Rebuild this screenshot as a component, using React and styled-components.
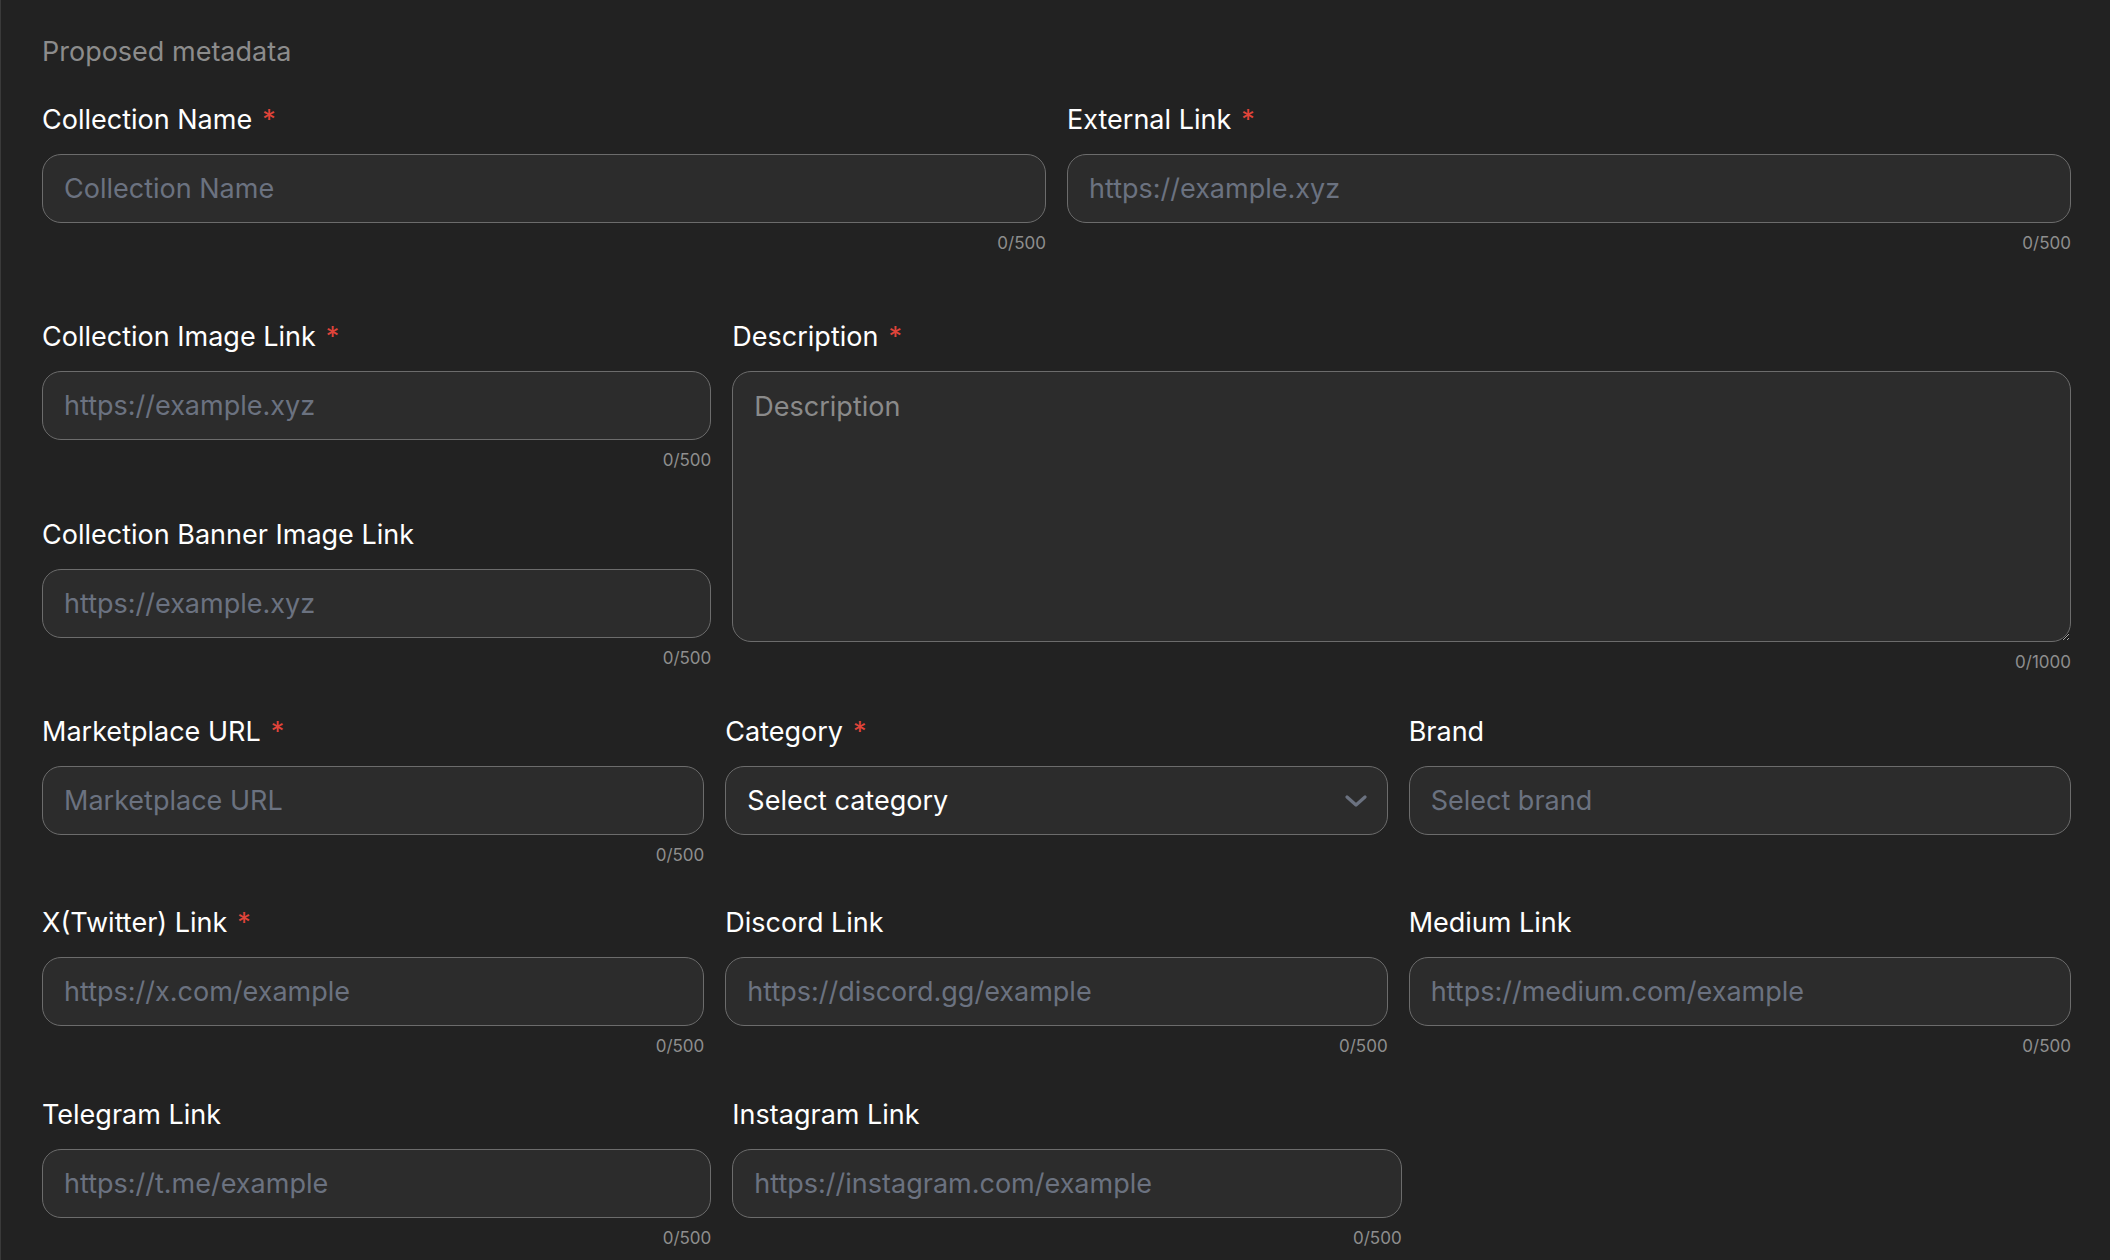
import React from "react";
import styled, { createGlobalStyle } from "styled-components";

const Global = createGlobalStyle`
  html, body {
    margin: 0;
    padding: 0;
    background: #222222;
    overflow: hidden;
  }
  body {
    font-family: Inter, "Noto Sans", "Liberation Sans", sans-serif;
  }
  * { box-sizing: border-box; }
`;

const Page = styled.div`
  min-height: 1260px;
  background: #222222;
  border-left: 1px solid #3a3a3a;
  padding: 34px 39px 0 41px;
  display: flex;
  flex-direction: column;
`;

const Heading = styled.div`
  font-size: 27px;
  line-height: 36px;
  color: #8c8c8c;
  margin-bottom: 32px;
`;

const Row = styled.div`
  display: grid;
  grid-template-columns: ${(p) => p.$cols};
  column-gap: 21px;
  align-items: start;
  margin-bottom: ${(p) => p.$mb ?? 40}px;
`;

const Stack = styled.div`
  display: flex;
  flex-direction: column;
  gap: 46px;
`;

const Field = styled.div`
  display: flex;
  flex-direction: column;
  min-width: 0;
`;

const Label = styled.label`
  font-size: 27px;
  line-height: 36px;
  color: #ffffff;
  margin-bottom: 16px;
  white-space: nowrap;
`;

const Req = styled.span`
  color: #e0443a;
  margin-left: 10px;
`;

const controlBase = `
  width: 100%;
  background: #2c2c2c;
  border: 1px solid #6c6c6c;
  border-radius: 19px;
  font-family: Inter, "Noto Sans", "Liberation Sans", sans-serif;
  font-size: 27px;
  color: #ffffff;
  outline: none;
`;

const Input = styled.input`
  ${controlBase}
  height: 69px;
  padding: 0 21px;
  &::placeholder {
    color: #6b7280;
  }
`;

const TextArea = styled.textarea`
  ${controlBase}
  color-scheme: dark;
  height: 271px;
  padding: 17px 21px;
  line-height: 36px;
  resize: vertical;
  &::placeholder {
    color: #8a8a8a;
  }
`;

const SelectBox = styled.div`
  ${controlBase}
  height: 69px;
  padding: 0 20px 0 21px;
  display: flex;
  align-items: center;
  justify-content: space-between;
`;

const Counter = styled.div`
  align-self: flex-end;
  margin-top: 9px;
  font-size: 17px;
  line-height: 22px;
  color: #8e8e8e;
`;

const Chevron = () => (
  <svg width="22" height="12" viewBox="0 0 22 12" fill="none">
    <polyline
      points="2,2 11,10 20,2"
      stroke="#6b7280"
      strokeWidth="3.2"
      strokeLinecap="round"
      strokeLinejoin="round"
    />
  </svg>
);

function TextField({ label, required, placeholder, max = 500 }) {
  return (
    <Field>
      <Label>
        {label}
        {required && <Req>*</Req>}
      </Label>
      <Input placeholder={placeholder} />
      <Counter>0/{max}</Counter>
    </Field>
  );
}

const third = "calc((100% - 42px) / 3)";
const wideThird = "calc((100% - 21px) / 3)";

export default function App() {
  return (
    <>
      <Global />
      <Page>
        <Heading>Proposed metadata</Heading>

        <Row $cols="1fr 1fr" $mb={65}>
          <TextField label="Collection Name" required placeholder="Collection Name" />
          <TextField label="External Link" required placeholder="https://example.xyz" />
        </Row>

        <Row $cols="1fr 2fr" $mb={41}>
          <Stack>
            <TextField label="Collection Image Link" required placeholder="https://example.xyz" />
            <TextField label="Collection Banner Image Link" placeholder="https://example.xyz" />
          </Stack>
          <Field>
            <Label>
              Description<Req>*</Req>
            </Label>
            <TextArea placeholder="Description" />
            <Counter>0/1000</Counter>
          </Field>
        </Row>

        <Row $cols={`${third} ${third} ${third}`} $mb={39}>
          <TextField label="Marketplace URL" required placeholder="Marketplace URL" />
          <Field>
            <Label>
              Category<Req>*</Req>
            </Label>
            <SelectBox>
              <span>Select category</span>
              <Chevron />
            </SelectBox>
          </Field>
          <Field>
            <Label>Brand</Label>
            <Input placeholder="Select brand" />
          </Field>
        </Row>

        <Row $cols={`${third} ${third} ${third}`}>
          <TextField label="X(Twitter) Link" required placeholder="https://x.com/example" />
          <TextField label="Discord Link" placeholder="https://discord.gg/example" />
          <TextField label="Medium Link" placeholder="https://medium.com/example" />
        </Row>

        <Row $cols={`${wideThird} ${wideThird}`} $mb={0}>
          <TextField label="Telegram Link" placeholder="https://t.me/example" />
          <TextField label="Instagram Link" placeholder="https://instagram.com/example" />
        </Row>
      </Page>
    </>
  );
}
